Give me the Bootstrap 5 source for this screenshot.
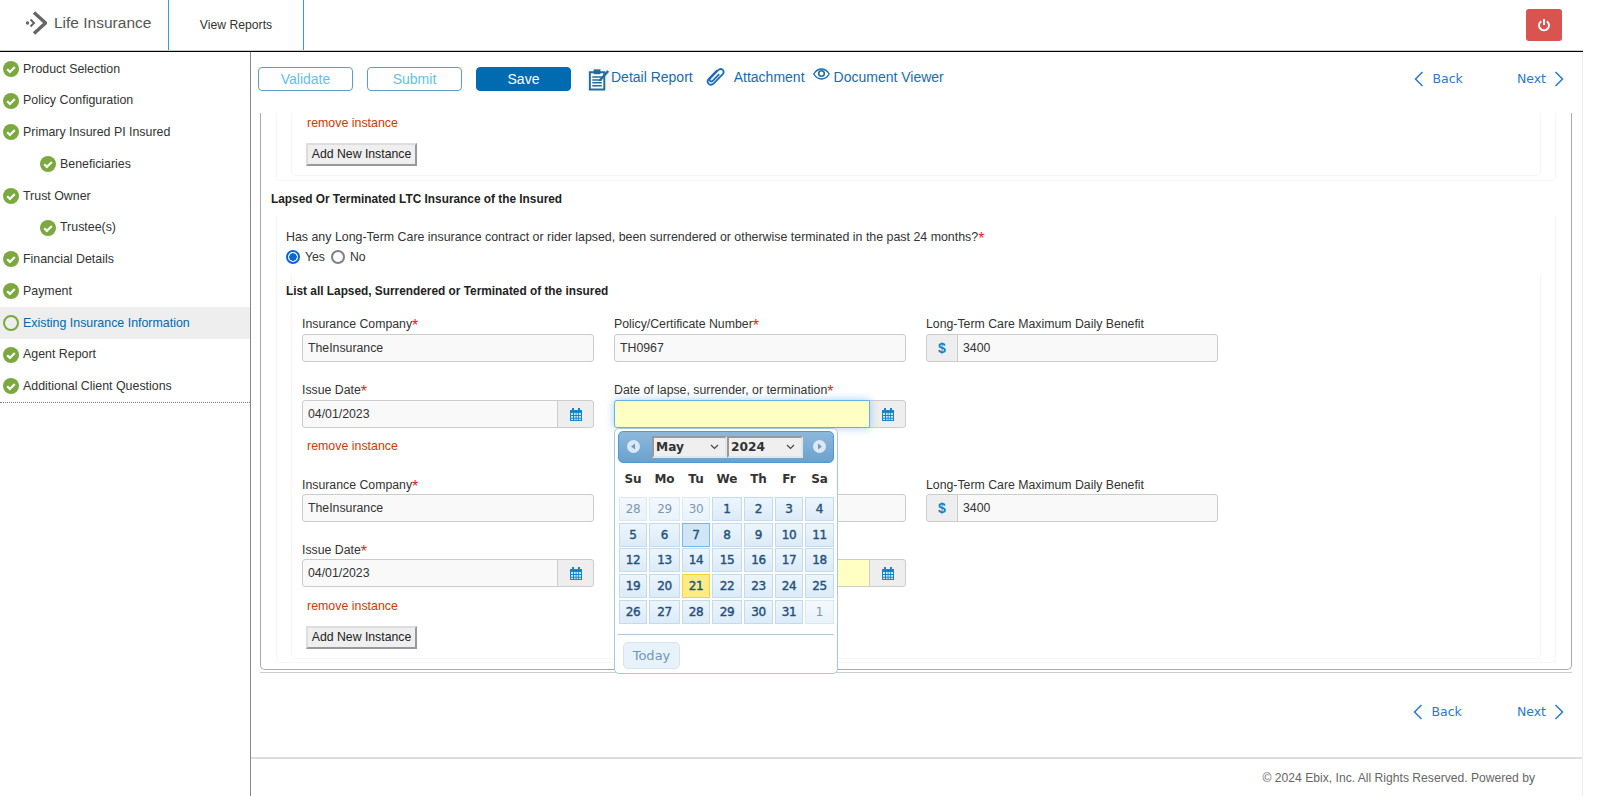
<!DOCTYPE html>
<html lang="en">
<head>
  <meta charset="UTF-8" />
  <title>Life Insurance</title>
  <link href="https://cdn.jsdelivr.net/npm/bootstrap@5.3.0/dist/css/bootstrap.min.css" rel="stylesheet">
  <style>
    html, body { height: 796px; overflow: hidden; }
    body { font-family: "Liberation Sans", Arial, sans-serif; font-size: 12.25px; color: #333; background: #fff; }
    #page { width: 1583px; height: 796px; }

    /* header */
    #topbar { height: 52px; flex: none; border-bottom: 1px solid #000; box-shadow: inset 0 -1px 0 #ccc; }
    .brand-box { width: 168px; height: 50px; padding: 0 0 4px 25px; color: #555; font-size: 15.5px; }
    .brand-box svg { margin-right: 7px; }
    .report-tab { width: 136px; height: 50px; border-left: 1px solid #2a9fd8; border-right: 1px solid #2a9fd8; color: #333; font-size: 12.2px; padding-top: 1px; }
    .power-btn { width: 36px; height: 32px; margin: 9px 21px 0 0; background: #d9534f; border: 0; border-radius: 3px; padding: 0; }

    /* sidebar */
    #sidemenu { width: 251px; border-right: 1px solid #888; flex: none; }
    #sidemenu ul { width: 250px; padding-top: 1px; border-bottom: 1px dotted #777; }
    #sidemenu li { height: 31.75px; padding-left: 3px; color: #333; font-size: 12.4px; }
    #sidemenu li.sub-item { padding-left: 40px; }
    #sidemenu li svg { margin-right: 4px; flex: none; }
    #sidemenu li.current { background: #eee; color: #0069ae; }

    /* toolbar */
    #content { border-right: 1px solid #eee; min-width: 0; }
    .tool-row { height: 61px; padding: 15px 18px 0 7px; }
    .tool-btn { width: 95px; height: 24px; margin-right: 14px; padding: 0; font-size: 14px; line-height: 20px; border-radius: 4px; }
    .tool-outline { background: #fff; border: 1px solid #5d9fc4; color: #62bfe8; }
    .tool-fill, .tool-fill:hover { background: #006bb0; border: 1px solid #006bb0; color: #fff; }
    .tool-link { color: #1a6cab; font-size: 14px; text-decoration: none; line-height: 20px; }
    .detail-ic { margin-left: 2px; }
    .clip-gap { margin-left: 12px; }
    .eye-gap { margin-left: 8px; }
    .eye-ic { margin: 1px 4px 0 0; }
    .pager-link { color: #2a78c8; font-family: "DejaVu Sans", sans-serif; font-size: 12.5px; text-decoration: none; }
    .pager-link svg.chev-l { margin-right: 9px; }
    .pager-top { padding-top: 3px; }
    .pager-top .next-link { margin-left: 54px; }
    .pager-low .next-link { margin-left: 55px; }

    /* form panel */
    #formpanel { height: 557px; margin: 0 10px 0 9px; border: 1px solid #aaa; border-top: 0; border-radius: 0 0 5px 5px; }
    .panel-rule { height: 0; margin: 2px 10px 0 9px; border-top: 1px solid #ccc; }
    .soft-box { border: 1px solid #f5f5f5; border-top: 0; border-radius: 0 0 5px 5px; }
    .outer-a { height: 68px; margin: 0 15px; padding: 0 14px; }
    .inner-a { height: 63px; padding: 1px 14px 0; }
    .inner-a .add-btn { margin-top: 11px; }
    .sect-title { font-weight: 700; font-size: 11.85px; height: 18px; line-height: 18px; color: #222; }
    .lapsed-title { margin: 9px 0 0 10px; }
    .outer-b { height: 447px; margin: 8px 15px 0; padding: 12px 14px 0 9px; }
    .inner-b { height: 384px; margin: 9px 0 0 5px; padding: 7px 10px 0; }
    .line-18 { height: 18px; line-height: 18px; }
    .ask-line { font-size: 12.4px; }
    .yes-no { margin-top: 2px; }
    .yes-no input { appearance: none; width: 14px; height: 14px; margin: 0 5px 0 0; border: 2px solid #80808a; border-radius: 50%; background: #fff; }
    .yes-no input:checked { border-color: #0b66d8; background: radial-gradient(circle, #0b66d8 0 3.5px, #fff 4px); }
    .yes-no label { margin-right: 6px; }
    .list-title { margin: 0 0 15px -16px; }
    .field-grid { display: grid; grid-template-columns: repeat(3, 292px); column-gap: 20px; row-gap: 19px; }
    .field-grid label { display: block; height: 18px; line-height: 18px; margin-bottom: 1px; color: #333; font-size: 12.3px; }
    .grid-second { margin-top: 21px; }
    .field-grid.grid-second label { margin-bottom: 0; }
    .req { color: #e22; font-size: 16px; line-height: 0; vertical-align: -3px; }
    .field-input { height: 28px; padding: 0 5px; font-size: 12.3px; color: #333; background: #f9f9f9; border: 1px solid #ccc; border-radius: 3px; box-shadow: none; }
    .field-addon { height: 28px; padding: 0; justify-content: center; background: #eee; border: 1px solid #ccc; border-radius: 3px; color: #0a83c9; font-size: 14px; font-weight: 700; }
    .addon-date { width: 37px; }
    .addon-money { width: 32px; }
    .date-open, .date-open:focus { background: #ffffc4; border-color: #66afe9; box-shadow: 0 0 8px rgba(102, 175, 233, .6); }
    .date-idle { background: #ffffc4; }
    .remove-link { color: #d63600; font-size: 12.4px; padding-left: 1px; height: 18px; line-height: 18px; text-decoration: none; display: block; }
    .inner-b .remove-link { margin: 9px 0 0 4px; }
    .inner-b .grid-second + .remove-link { margin-top: 10px; }
    .add-btn { width: 111px; height: 23px; padding: 0; font-size: 12.25px; color: #222; background: #efefef; border: 2px solid; border-color: #ddd #999 #999 #ddd; border-radius: 0; }
    .inner-b .add-btn { display: block; margin: 11px 0 0 4px; }

    /* date popup */
    .date-wrap { position: relative; }
    #datepop { position: absolute; left: 0; top: 28px; z-index: 10; width: 224px; height: 246px; background: #fff; border: 1px solid #a6c9e2; border-radius: 5px; padding: 2px 3px; font-family: "DejaVu Sans", sans-serif; }
    .pop-head { height: 32px; background: linear-gradient(#8db8dc, #6aa2cf); border: 1px solid #4c9ad6; border-radius: 5px; padding-top: 4px; }
    .pop-head select { appearance: none; height: 22px; font-family: "DejaVu Sans", sans-serif; font-size: 12.2px; font-weight: 700; color: #333; border: 2px solid; border-color: #999 #e4e4e4 #e4e4e4 #999; border-radius: 0; padding: 0 0 0 2px;
      background: #efefef url("data:image/svg+xml,%3Csvg xmlns='http://www.w3.org/2000/svg' width='9' height='6'%3E%3Cpath d='M1 1l3.500 3.500L8 1' fill='none' stroke='%23444' stroke-width='1.200'/%3E%3C/svg%3E") no-repeat right 6px center; }
    .pop-month { width: 75px; margin-left: 12px; }
    .pop-year { width: 76px; }
    .pop-arrow { width: 13px; height: 13px; border-radius: 50%; background: #dce9f5; margin: 4px 0 0 8px; flex: none; }
    .pop-arrow svg { display: block; }
    .pop-next { margin-left: 10px; }
    .pop-days, .pop-cells { display: grid; grid-template-columns: 28px 31px 28px 30px 29px 28px 29px; column-gap: 2px; margin-left: 1px; }
    .pop-days { height: 34px; padding-top: 8px; font-size: 12px; font-weight: 700; color: #333; text-align: center; line-height: 16px; }
    .pop-cells { grid-auto-rows: 24px; row-gap: 1.7px; }
    .day-cell { border: 1px solid #c5dbec; background: linear-gradient(#ecf5fd, #e4f0fb 50%, #dcebf8); color: #24507c; font-size: 12px; letter-spacing: -.3px; -webkit-text-stroke: .4px #24507c; text-align: center; line-height: 22px; }
    .day-other { opacity: .6; -webkit-text-stroke: 0; }
    .day-active { background: #d0e5f5; border-color: #79b7e7; }
    .day-now { background: #fbec88; border-color: #fad42e; }
    .pop-foot { margin-top: 10px; padding: 7px 0 0 5px; border-top: 1px solid #a6c9e2; }
    .today-btn { display: inline-block; width: 57px; height: 27px; line-height: 25px; text-align: center; border: 1px solid #d5e4f1; border-radius: 5px; background: #e8f2fb; color: #6f97bb; font-size: 13px; }

    /* lower part */
    .pager-low { height: 84px; padding: 30px 18px 0 0; }
    #footline { height: 39px; border-top: 2px solid #ddd; padding: 11px 47px 0 0; color: #666; font-size: 12.13px; line-height: 16px; text-align: right; }
  </style>
</head>
<body>
  <svg width="0" height="0" class="position-absolute">
    <symbol id="ok-mark" viewBox="0 0 16 16">
      <circle cx="8" cy="8" r="8" fill="#7ba83f"/>
      <path d="M4.2 8.2l2.7 2.7 4.9-5" fill="none" stroke="#fff" stroke-width="2.2"/>
    </symbol>
    <symbol id="cal-mark" viewBox="0 0 12 13">
      <path d="M0 2h12v11H0z" fill="#1585c8"/>
      <path d="M2 0h2v3H2zM8 0h2v3H8z" fill="#1585c8"/>
      <path d="M1 5h2v2H1zM4 5h1.700v2H4zM6.500 5h1.700v2H6.500zM9 5h2v2H9zM1 8h2v1.800H1zM4 8h1.700v1.800H4zM6.500 8h1.700v1.800H6.500zM9 8h2v1.800H9zM1 10.700h2V12H1zM4 10.700h1.700V12H4zM6.500 10.700h1.700V12H6.500zM9 10.700h2V12H9z" fill="#cfe6f5"/>
    </symbol>
    <symbol id="chev-left" viewBox="0 0 10 16"><path d="M8.500 1L1.500 8l7 7" fill="none" stroke="#2a78c8" stroke-width="1.500"/></symbol>
    <symbol id="chev-right" viewBox="0 0 10 16"><path d="M1.500 1l7 7-7 7" fill="none" stroke="#2a78c8" stroke-width="1.500"/></symbol>
  </svg>

  <div id="page" class="d-flex flex-column">
    <header id="topbar" class="d-flex">
      <div class="brand-box d-flex align-items-center">
        <svg width="22" height="24" viewBox="0 0 22 24">
          <circle cx="2.500" cy="12" r="1.700" fill="#666"/>
          <path d="M5.500 8.500L9 12l-3.500 3.500" fill="none" stroke="#666" stroke-width="2"/>
          <path d="M9 1.500L20.500 12 9 22.500" fill="none" stroke="#666" stroke-width="3.400"/>
        </svg>
        <span>Life Insurance</span>
      </div>
      <div class="report-tab d-flex align-items-center justify-content-center">View Reports</div>
      <button class="btn power-btn ms-auto d-flex align-items-center justify-content-center" type="button" aria-label="Log out">
        <svg width="14" height="14" viewBox="0 0 14 14"><path d="M4.300 3.200a5 5 0 1 0 5.400 0" fill="none" stroke="#fff" stroke-width="1.900"/><path d="M7 1v6" stroke="#fff" stroke-width="1.900"/></svg>
      </button>
    </header>

    <div class="d-flex flex-grow-1">
      <nav id="sidemenu">
        <ul class="list-unstyled m-0">
          <li class="d-flex align-items-center"><svg width="16" height="16"><use href="#ok-mark"/></svg>Product Selection</li>
          <li class="d-flex align-items-center"><svg width="16" height="16"><use href="#ok-mark"/></svg>Policy Configuration</li>
          <li class="d-flex align-items-center"><svg width="16" height="16"><use href="#ok-mark"/></svg>Primary Insured PI Insured</li>
          <li class="d-flex align-items-center sub-item"><svg width="16" height="16"><use href="#ok-mark"/></svg>Beneficiaries</li>
          <li class="d-flex align-items-center"><svg width="16" height="16"><use href="#ok-mark"/></svg>Trust Owner</li>
          <li class="d-flex align-items-center sub-item"><svg width="16" height="16"><use href="#ok-mark"/></svg>Trustee(s)</li>
          <li class="d-flex align-items-center"><svg width="16" height="16"><use href="#ok-mark"/></svg>Financial Details</li>
          <li class="d-flex align-items-center"><svg width="16" height="16"><use href="#ok-mark"/></svg>Payment</li>
          <li class="d-flex align-items-center current"><svg width="16" height="16" viewBox="0 0 16 16"><circle cx="8" cy="8" r="7" fill="none" stroke="#7ba83f" stroke-width="2"/></svg>Existing Insurance Information</li>
          <li class="d-flex align-items-center"><svg width="16" height="16"><use href="#ok-mark"/></svg>Agent Report</li>
          <li class="d-flex align-items-center"><svg width="16" height="16"><use href="#ok-mark"/></svg>Additional Client Questions</li>
        </ul>
      </nav>

      <main id="content" class="flex-grow-1 d-flex flex-column">
        <div class="tool-row d-flex align-items-start">
          <button type="button" class="btn tool-btn tool-outline">Validate</button>
          <button type="button" class="btn tool-btn tool-outline">Submit</button>
          <button type="button" class="btn tool-btn tool-fill">Save</button>
          <a href="#" class="tool-link d-flex align-items-start">
            <svg width="24" height="24" viewBox="0 0 25 24" class="detail-ic">
              <rect width="25" height="24" fill="#f1f7fa"/>
              <path d="M3 5h15v18H3z" fill="#fff" stroke="#236c99" stroke-width="2"/>
              <path d="M7 2h7v5H7z" fill="#236c99"/>
              <path d="M5.500 10h10M5.500 13h10M5.500 16h10M5.500 19h10" stroke="#236c99" stroke-width="1.500"/>
              <path d="M13 12l8-9 2 1.500-8 9-3 1z" fill="#236c99"/>
            </svg>
            <span>Detail Report</span>
          </a>
          <a href="#" class="tool-link d-flex align-items-start clip-gap">
            <svg width="21" height="20" viewBox="0 0 21 20" class="me-2">
              <path d="M12 3.500L4 11.500c-2 2.200-1.500 4.200-.3 5.300 1.300 1.200 3.300 1.300 5.100-.4l8.700-8.900c1.500-1.700 1.300-3.500.2-4.600-1.200-1.100-3-1.200-4.500.3l-8 8.200c-.9 1-.7 2 0 2.600.7.600 1.700.6 2.500-.2l6.500-6.700" fill="none" stroke="#1a6cc0" stroke-width="1.800"/>
            </svg>
            <span>Attachment</span>
          </a>
          <a href="#" class="tool-link d-flex align-items-start eye-gap">
            <svg width="17" height="12" viewBox="0 0 17 12" class="eye-ic">
              <path d="M.8 6C3 2.400 5.500 1 8.500 1s5.500 1.400 7.700 5c-2.200 3.600-4.700 5-7.700 5S3 9.600.8 6z" fill="none" stroke="#1a6cab" stroke-width="1.400"/>
              <circle cx="8.500" cy="5.500" r="2.800" fill="none" stroke="#1a6cab" stroke-width="1.600"/>
            </svg>
            <span>Document Viewer</span>
          </a>
          <div class="pager-top ms-auto d-flex">
            <a href="#" class="pager-link d-flex align-items-center"><svg width="10" height="16" class="chev-l"><use href="#chev-left"/></svg>Back</a>
            <a href="#" class="pager-link next-link d-flex align-items-center"><span>Next</span><svg width="10" height="16" class="ms-2"><use href="#chev-right"/></svg></a>
          </div>
        </div>

        <section id="formpanel">
          <div class="soft-box outer-a">
            <div class="soft-box inner-a">
              <a href="#" class="remove-link">remove instance</a>
              <button type="button" class="add-btn">Add New Instance</button>
            </div>
          </div>
          <div class="sect-title lapsed-title">Lapsed Or Terminated LTC Insurance of the Insured</div>
          <div class="soft-box outer-b">
            <div class="line-18 ask-line">Has any Long-Term Care insurance contract or rider lapsed, been surrendered or otherwise terminated in the past 24 months?<span class="req">*</span></div>
            <div class="yes-no line-18 d-flex align-items-center">
              <input type="radio" name="lapsed" id="lapsedYes" checked><label for="lapsedYes">Yes</label>
              <input type="radio" name="lapsed" id="lapsedNo"><label for="lapsedNo">No</label>
            </div>
            <div class="soft-box inner-b">
              <div class="sect-title list-title">List all Lapsed, Surrendered or Terminated of the insured</div>

              <div class="field-grid">
                <div><label>Insurance Company<span class="req">*</span></label><input class="form-control field-input" value="TheInsurance"></div>
                <div><label>Policy/Certificate Number<span class="req">*</span></label><input class="form-control field-input" value="TH0967"></div>
                <div><label>Long-Term Care Maximum Daily Benefit</label>
                  <div class="input-group"><span class="input-group-text field-addon addon-money">$</span><input class="form-control field-input" value="3400"></div></div>
                <div><label>Issue Date<span class="req">*</span></label>
                  <div class="input-group"><input class="form-control field-input" value="04/01/2023"><span class="input-group-text field-addon addon-date"><svg width="12" height="13"><use href="#cal-mark"/></svg></span></div></div>
                <div><label>Date of lapse, surrender, or termination<span class="req">*</span></label>
                  <div class="date-wrap">
                    <div class="input-group"><input class="form-control field-input date-open"><span class="input-group-text field-addon addon-date"><svg width="12" height="13"><use href="#cal-mark"/></svg></span></div>
                    <div id="datepop">
                      <div class="pop-head d-flex align-items-start">
                        <span class="pop-arrow"><svg width="13" height="13" viewBox="0 0 13 13"><path d="M8 3.500v6L4 6.500z" fill="#6f9ac4"/></svg></span>
                        <select class="pop-month"><option>May</option></select>
                        <select class="pop-year"><option>2024</option></select>
                        <span class="pop-arrow pop-next"><svg width="13" height="13" viewBox="0 0 13 13"><path d="M5 3.500v6L9 6.500z" fill="#6f9ac4"/></svg></span>
                      </div>
                      <div class="pop-days"><span>Su</span><span>Mo</span><span>Tu</span><span>We</span><span>Th</span><span>Fr</span><span>Sa</span></div>
                      <div class="pop-cells">
                        <span class="day-cell day-other">28</span><span class="day-cell day-other">29</span><span class="day-cell day-other">30</span><span class="day-cell">1</span><span class="day-cell">2</span><span class="day-cell">3</span><span class="day-cell">4</span>
                        <span class="day-cell">5</span><span class="day-cell">6</span><span class="day-cell day-active">7</span><span class="day-cell">8</span><span class="day-cell">9</span><span class="day-cell">10</span><span class="day-cell">11</span>
                        <span class="day-cell">12</span><span class="day-cell">13</span><span class="day-cell">14</span><span class="day-cell">15</span><span class="day-cell">16</span><span class="day-cell">17</span><span class="day-cell">18</span>
                        <span class="day-cell">19</span><span class="day-cell">20</span><span class="day-cell day-now">21</span><span class="day-cell">22</span><span class="day-cell">23</span><span class="day-cell">24</span><span class="day-cell">25</span>
                        <span class="day-cell">26</span><span class="day-cell">27</span><span class="day-cell">28</span><span class="day-cell">29</span><span class="day-cell">30</span><span class="day-cell">31</span><span class="day-cell day-other">1</span>
                      </div>
                      <div class="pop-foot"><span class="today-btn">Today</span></div>
                    </div>
                  </div></div>
              </div>
              <a href="#" class="remove-link">remove instance</a>

              <div class="field-grid grid-second">
                <div><label>Insurance Company<span class="req">*</span></label><input class="form-control field-input" value="TheInsurance"></div>
                <div><label>Policy/Certificate Number<span class="req">*</span></label><input class="form-control field-input" value="TH0967"></div>
                <div><label>Long-Term Care Maximum Daily Benefit</label>
                  <div class="input-group"><span class="input-group-text field-addon addon-money">$</span><input class="form-control field-input" value="3400"></div></div>
                <div><label>Issue Date<span class="req">*</span></label>
                  <div class="input-group"><input class="form-control field-input" value="04/01/2023"><span class="input-group-text field-addon addon-date"><svg width="12" height="13"><use href="#cal-mark"/></svg></span></div></div>
                <div><label>Date of lapse, surrender, or termination<span class="req">*</span></label>
                  <div class="input-group"><input class="form-control field-input date-idle"><span class="input-group-text field-addon addon-date"><svg width="12" height="13"><use href="#cal-mark"/></svg></span></div></div>
              </div>
              <a href="#" class="remove-link">remove instance</a>
              <button type="button" class="add-btn">Add New Instance</button>
            </div>
          </div>
        </section>
        <div class="panel-rule"></div>

        <div class="pager-low d-flex justify-content-end align-items-start">
          <a href="#" class="pager-link d-flex align-items-center"><svg width="10" height="16" class="chev-l"><use href="#chev-left"/></svg>Back</a>
          <a href="#" class="pager-link next-link d-flex align-items-center"><span>Next</span><svg width="10" height="16" class="ms-2"><use href="#chev-right"/></svg></a>
        </div>
        <footer id="footline">© 2024 Ebix, Inc. All Rights Reserved. Powered by</footer>
      </main>
    </div>
  </div>
  <script src="https://cdn.jsdelivr.net/npm/bootstrap@5.3.0/dist/js/bootstrap.bundle.min.js"></script>
</body>
</html>
